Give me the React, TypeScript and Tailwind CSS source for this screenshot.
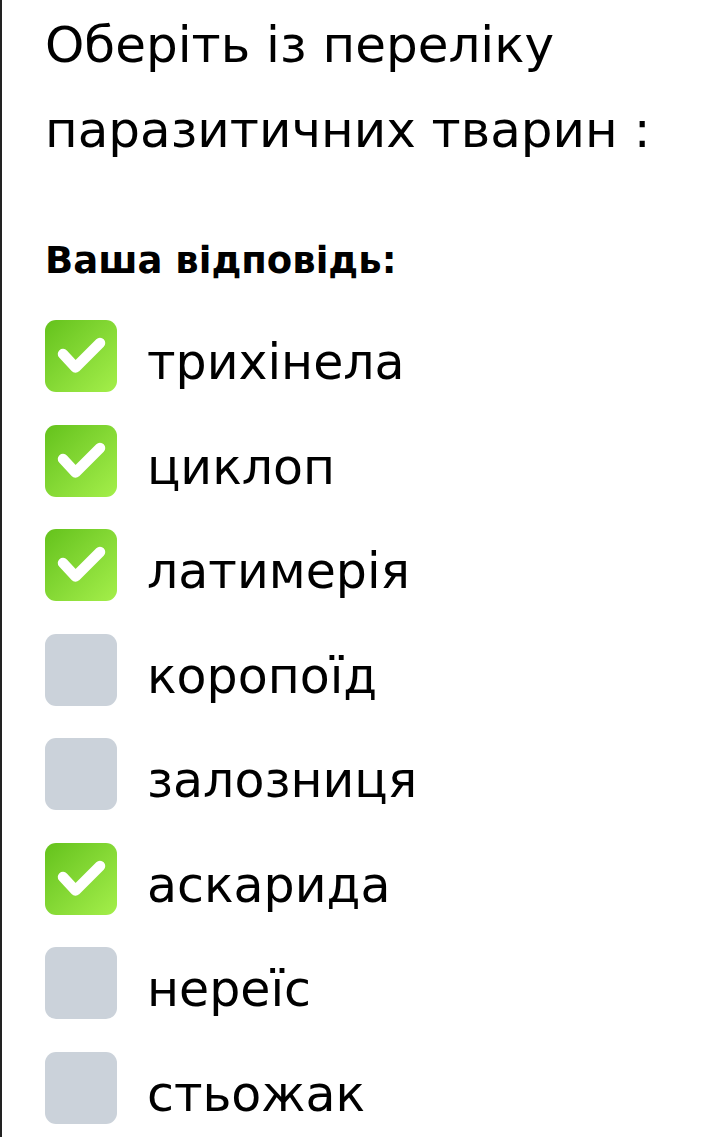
import React from "react";

const items: { label: string; checked: boolean }[] = [
  { label: "трихінела", checked: true },
  { label: "циклоп", checked: true },
  { label: "латимерія", checked: true },
  { label: "коропоїд", checked: false },
  { label: "залозниця", checked: false },
  { label: "аскарида", checked: true },
  { label: "нереїс", checked: false },
  { label: "стьожак", checked: false },
];

function Box({ checked }: { checked: boolean }) {
  if (!checked) {
    return <div className="w-[72px] h-[72px] shrink-0 rounded-[11px] bg-[#cbd2da]" />;
  }
  return (
    <div className="w-[72px] h-[72px] shrink-0 rounded-[11px] bg-gradient-to-br from-[#64c21b] to-[#a4ef4a] flex items-center justify-center">
      <svg width="72" height="72" viewBox="0 0 72 72">
        <path
          d="M18 34 L30.5 47.5 L55 23"
          fill="none"
          stroke="#fff"
          strokeWidth="10.5"
          strokeLinecap="round"
          strokeLinejoin="round"
        />
      </svg>
    </div>
  );
}

export default function App() {
  return (
    <div
      className="w-[724px] h-[1137px] bg-white border-l-2 border-[#222] pl-[43px] overflow-hidden text-black"
      style={{ fontFamily: '"DejaVu Sans", "Open Sans", sans-serif' }}
    >
      <h1 className="pt-[3px] text-[50px] leading-[85px] font-normal">
        Оберіть із переліку
        <br />
        паразитичних тварин :
      </h1>
      <div className="mt-[63px] text-[37px] leading-[49px] font-bold">Ваша відповідь:</div>
      <div className="mt-[35px] flex flex-col gap-[32.5px]">
        {items.map((it) => (
          <div key={it.label} className="flex items-start h-[72px]">
            <Box checked={it.checked} />
            <span className="ml-[30px] text-[49px] leading-[86px] whitespace-nowrap">{it.label}</span>
          </div>
        ))}
      </div>
    </div>
  );
}
